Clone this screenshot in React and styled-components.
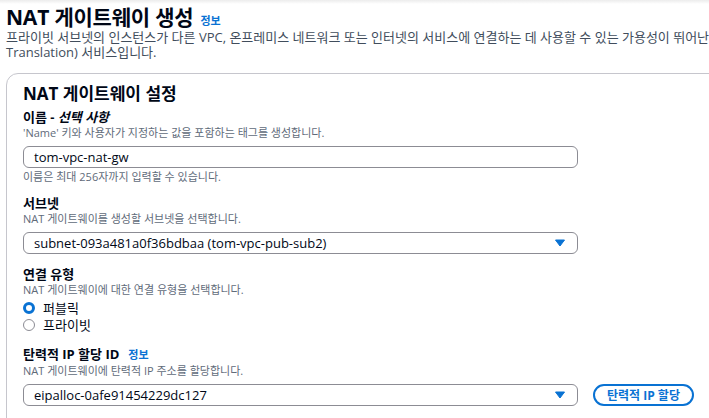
import React from 'react';
import styled, { createGlobalStyle } from 'styled-components';

const GlobalStyle = createGlobalStyle`
  html, body {
    margin: 0;
    padding: 0;
    background: #ffffff;
    overflow: hidden;
  }
  body {
    font-family: "Open Sans", "Noto Sans CJK KR", sans-serif;
    color: #000716;
  }
`;

const Page = styled.div`
  position: relative;
  padding: 4px 0 0 6px;
  width: 1000px;
  &::before {
    content: '';
    position: absolute;
    left: 0;
    top: 0;
    width: 100%;
    height: 4px;
    background: linear-gradient(#ececec, rgba(255, 255, 255, 0));
  }
`;

const TitleRow = styled.div`
  display: flex;
  align-items: baseline;
  gap: 7px;
  height: 26px;
`;

const Title = styled.h1`
  margin: 0;
  font-size: 21px;
  line-height: 26px;
  font-weight: 700;
  letter-spacing: -0.2px;
`;

const InfoLink = styled.a`
  color: #0972d3;
  font-weight: 700;
  font-size: ${p => p.$size || 11}px;
  text-decoration: none;
`;

const Intro = styled.p`
  margin: 0;
  font-size: 13px;
  line-height: 15px;
  color: #414d5c;
  white-space: nowrap;
`;

const Card = styled.section`
  margin-top: 13px;
  border: 1px solid #c6c6cd;
  border-radius: 12px;
  padding: 9px 0 40px 16px;
  width: 900px;
`;

const CardTitle = styled.h2`
  margin: 0 0 4px;
  font-size: 17px;
  line-height: 22px;
  font-weight: 700;
`;

const Field = styled.div`
  display: flex;
  flex-direction: column;
  margin-top: ${p => p.$top || 0}px;
`;

const Label = styled.div`
  display: flex;
  align-items: baseline;
  gap: 9px;
  font-size: 13px;
  line-height: 16px;
  font-weight: 700;
  em {
    font-style: italic;
  }
`;

const Desc = styled.div`
  margin-top: 1px;
  font-size: 11px;
  line-height: 14px;
  color: #5f6b7a;
`;

const Hint = styled(Desc)`
  margin-top: 2px;
`;

const ControlRow = styled.div`
  display: flex;
  align-items: center;
  gap: 15px;
  margin-top: 6px;
`;

const Box = styled.div`
  box-sizing: border-box;
  width: 555px;
  height: 22px;
  border: 1px solid #8c8c94;
  border-radius: 6px;
  padding: 0 11px 0 10px;
  display: flex;
  align-items: center;
  justify-content: space-between;
  font-size: 13px;
  color: #000716;
`;

const Caret = styled.svg`
  width: 10px;
  height: 8px;
  margin-right: 1px;
`;

const RadioList = styled.div`
  display: flex;
  flex-direction: column;
  margin-top: 2px;
`;

const RadioRow = styled.label`
  display: flex;
  align-items: center;
  gap: 8px;
  height: 17px;
  font-size: 13px;
  color: #000716;
`;

const Dot = styled.span`
  box-sizing: border-box;
  width: 12px;
  height: 12px;
  border-radius: 50%;
  border: ${p => (p.$on ? '3.5px solid #0972d3' : '1.5px solid #8c8c94')};
  background: #fff;
`;

const PillButton = styled.button`
  box-sizing: border-box;
  height: 22px;
  padding: 0 12px;
  border: 2px solid #0972d3;
  border-radius: 12px;
  background: #fff;
  color: #0972d3;
  font-family: inherit;
  font-size: 12px;
  font-weight: 700;
  white-space: nowrap;
`;

const Select = ({ value }) => (
  <Box>
    <span>{value}</span>
    <Caret viewBox="0 0 10 8">
      <path d="M0.5 1 L9.5 1 L5 7 Z" fill="#0972d3" stroke="#0972d3" strokeLinejoin="round" />
    </Caret>
  </Box>
);

export default function App() {
  return (
    <>
      <GlobalStyle />
      <Page>
        <TitleRow>
          <Title>NAT 게이트웨이 생성</Title>
          <InfoLink $size={11}>정보</InfoLink>
        </TitleRow>
        <Intro>
          프라이빗 서브넷의 인스턴스가 다른 VPC, 온프레미스 네트워크 또는 인터넷의 서비스에 연결하는 데 사용할 수 있는 가용성이 뛰어난 관리형 NAT(Network Address
          <br />
          Translation) 서비스입니다.
        </Intro>

        <Card>
          <CardTitle>NAT 게이트웨이 설정</CardTitle>

          <Field>
            <Label>
              <span>이름 - <em>선택 사항</em></span>
            </Label>
            <Desc>'Name' 키와 사용자가 지정하는 값을 포함하는 태그를 생성합니다.</Desc>
            <ControlRow>
              <Box>tom-vpc-nat-gw</Box>
            </ControlRow>
            <Hint>이름은 최대 256자까지 입력할 수 있습니다.</Hint>
          </Field>

          <Field $top={11}>
            <Label>서브넷</Label>
            <Desc>NAT 게이트웨이를 생성할 서브넷을 선택합니다.</Desc>
            <ControlRow>
              <Select value="subnet-093a481a0f36bdbaa (tom-vpc-pub-sub2)" />
            </ControlRow>
          </Field>

          <Field $top={12}>
            <Label>연결 유형</Label>
            <Desc>NAT 게이트웨이에 대한 연결 유형을 선택합니다.</Desc>
            <RadioList>
              <RadioRow>
                <Dot $on />
                퍼블릭
              </RadioRow>
              <RadioRow>
                <Dot />
                프라이빗
              </RadioRow>
            </RadioList>
          </Field>

          <Field $top={13}>
            <Label>
              <span>탄력적 IP 할당 ID</span>
              <InfoLink $size={11}>정보</InfoLink>
            </Label>
            <Desc>NAT 게이트웨이에 탄력적 IP 주소를 할당합니다.</Desc>
            <ControlRow>
              <Select value="eipalloc-0afe91454229dc127" />
              <PillButton>탄력적 IP 할당</PillButton>
            </ControlRow>
          </Field>
        </Card>
      </Page>
    </>
  );
}
